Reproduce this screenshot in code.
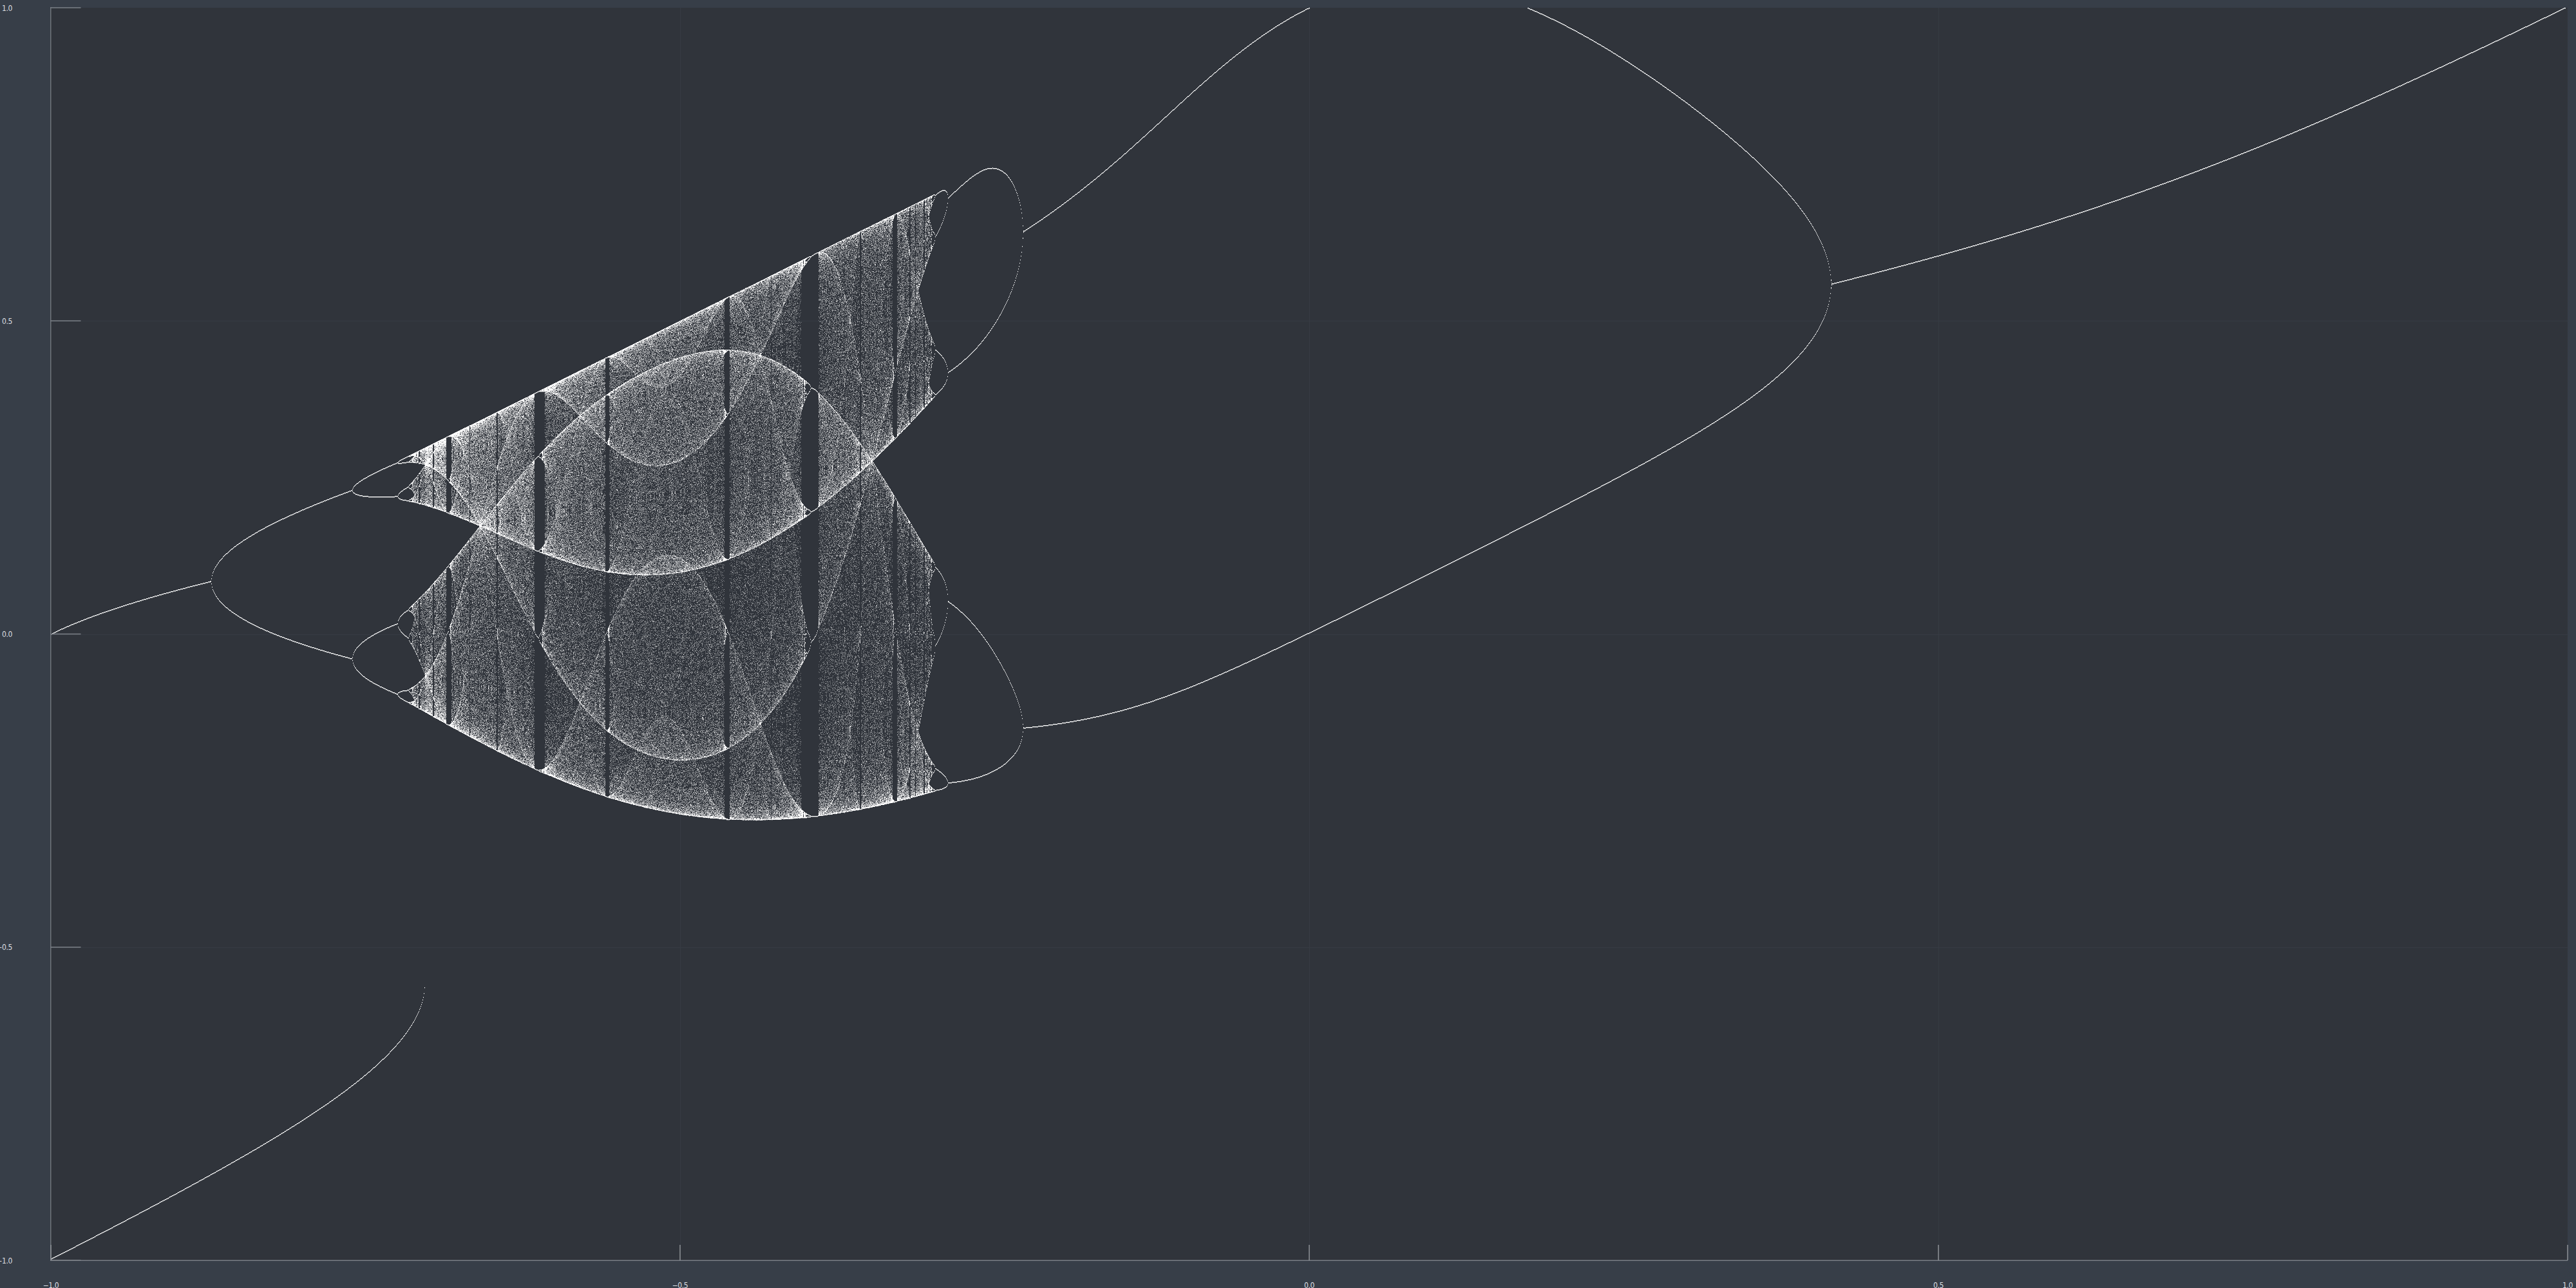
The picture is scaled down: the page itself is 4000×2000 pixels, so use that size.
import React, { useMemo } from 'react';

// Gauss iterated map: x -> exp(-alpha x^2) + beta
const ALPHA = 6.2;
const PLOT_W = 3908;
const PLOT_H = 1945;
const TRANSIENT = 1500;
const SAMPLES = 260;
const SEEDS = [0, -1];
const LEVELS = [0.36, 0.6, 0.82, 1];
const CHUNK = 64;

const TICKS = [-1, -0.5, 0, 0.5, 1];

const xPos = (v: number) => ((v + 1) / 2) * PLOT_W;
const yPos = (v: number) => ((1 - v) / 2) * PLOT_H;
const label = (v: number) => (v < 0 ? '\u2212' : '') + Math.abs(v).toFixed(1);

function buildPaths() {
  const hits = new Uint16Array(PLOT_W * PLOT_H);
  for (let col = 0; col < PLOT_W; col++) {
    const beta = -1 + (2 * col) / PLOT_W;
    for (const seed of SEEDS) {
      let x = seed;
      for (let i = 0; i < TRANSIENT; i++) x = Math.exp(-ALPHA * x * x) + beta;
      for (let i = 0; i < SAMPLES; i++) {
        x = Math.exp(-ALPHA * x * x) + beta;
        const row = Math.min(Math.floor(yPos(x)), PLOT_H - 1);
        if (row >= 0) hits[row * PLOT_W + col]++;
      }
    }
  }

  const paths: { d: string; opacity: number }[] = [];
  for (let start = 0; start < PLOT_W; start += CHUNK) {
    const parts: string[][] = LEVELS.map(() => []);
    for (let col = start; col < Math.min(start + CHUNK, PLOT_W); col++) {
      for (let row = 0; row < PLOT_H; row++) {
        const n = hits[row * PLOT_W + col];
        if (n === 0) continue;
        parts[Math.min(n, LEVELS.length) - 1].push(`M${col} ${row}h1v1h-1z`);
        // settled orbits pile up on one pixel, the reference draws those a bit heavier
        if (n > 8) parts[0].push(`M${col} ${row + 1}h1v1h-1z`);
      }
    }
    parts.forEach((p, i) => {
      if (p.length) paths.push({ d: p.join(''), opacity: LEVELS[i] });
    });
  }
  return paths;
}

export default function App() {
  const paths = useMemo(buildPaths, []);

  return (
    <div className="w-[4000px] h-[2000px] overflow-hidden bg-[#373e48] pl-[79px] pr-[13px] pt-[12px] pb-[43px]">
      <div className="relative h-full w-full bg-[#30343b]">
        <svg
          width={PLOT_W}
          height={PLOT_H}
          viewBox={`0 0 ${PLOT_W} ${PLOT_H}`}
          shapeRendering="crispEdges"
          className="absolute left-0 top-0 overflow-visible"
        >
          {/* grid */}
          {TICKS.slice(1, 4).map((t) => (
            <g key={t} fill="#363b43">
              <rect x={Math.round(xPos(t))} y={0} width={1} height={PLOT_H} />
              <rect x={0} y={Math.round(yPos(t))} width={PLOT_W} height={1} />
            </g>
          ))}

          {paths.map((p, i) => (
            <path key={i} d={p.d} fill="#ffffff" fillOpacity={p.opacity} />
          ))}

          {/* axes and ticks */}
          <g shapeRendering="auto">
            <rect x={-1} y={-1} width={1.5} height={PLOT_H + 2} fill="#6f747b" />
            <rect x={-1} y={PLOT_H - 0.5} width={PLOT_W + 1} height={1.5} fill="#797e85" />
            {TICKS.map((t) => (
              <g key={t}>
                <rect x={-0.5} y={yPos(t) - 0.75} width={47} height={1.5} fill="#7b8087" />
                <rect x={xPos(t) - 0.75} y={PLOT_H - 24} width={1.5} height={24} fill="#8d9197" />
              </g>
            ))}
          </g>

          {/* tick labels */}
          <g
            fontFamily='"DejaVu Sans Condensed", Lato, sans-serif'
            fontSize={12}
            letterSpacing={-0.4}
            fill="#dcdee1"
            shapeRendering="auto"
          >
            {TICKS.map((t) => (
              <text key={t} x={-60} y={yPos(t) + 4.5} textAnchor="end">
                {label(t)}
              </text>
            ))}
            {TICKS.map((t) => (
              <text key={t} x={xPos(t)} y={PLOT_H + 43} textAnchor="middle">
                {label(t)}
              </text>
            ))}
          </g>
        </svg>
      </div>
    </div>
  );
}
